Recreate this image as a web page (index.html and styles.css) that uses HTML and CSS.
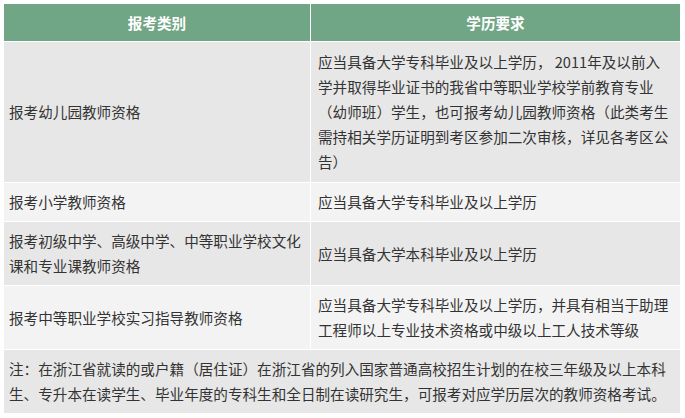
FILE: index.html
```html
<!DOCTYPE html>
<html lang="zh-CN">
<head>
<meta charset="utf-8">
<title>教师资格学历要求</title>
<link rel="stylesheet" href="styles.css">
</head>
<body>
<table class="req">
  <thead>
    <tr class="head">
      <th class="col-a">报考类别</th>
      <th class="col-b">学历要求</th>
    </tr>
  </thead>
  <tbody>
    <tr class="dark tall">
      <td class="left">报考幼儿园教师资格</td>
      <td class="right">应当具备大学专科毕业及以上学历， 2011年及以前入<br>学并取得毕业证书的我省中等职业学校学前教育专业<br>（幼师班）学生，也可报考幼儿园教师资格（此类考生<br>需持相关学历证明到考区参加二次审核，详见各考区公<br>告）</td>
    </tr>
    <tr class="light">
      <td class="left">报考小学教师资格</td>
      <td class="right">应当具备大学专科毕业及以上学历</td>
    </tr>
    <tr class="dark">
      <td class="left">报考初级中学、高级中学、中等职业学校文化<br>课和专业课教师资格</td>
      <td class="right">应当具备大学本科毕业及以上学历</td>
    </tr>
    <tr class="light">
      <td class="left">报考中等职业学校实习指导教师资格</td>
      <td class="right">应当具备大学专科毕业及以上学历，并具有相当于助理<br>工程师以上专业技术资格或中级以上工人技术等级</td>
    </tr>
    <tr class="dark">
      <td class="left note" colspan="2">注：在浙江省就读的或户籍（居住证）在浙江省的列入国家普通高校招生计划的在校三年级及以上本科<br>生、专升本在读学生、毕业年度的专科生和全日制在读研究生，可报考对应学历层次的教师资格考试。</td>
    </tr>
  </tbody>
</table>
</body>
</html>
```

FILE: styles.css
```css
html, body {
  margin: 0;
  padding: 0;
  background: #ffffff;
}

body {
  padding: 3px 0 0 3px;
  font-family: "Noto Sans CJK SC", "Microsoft YaHei", sans-serif;
  font-size: 14.6px;
  color: #333333;
}

.req {
  border-collapse: separate;
  border-spacing: 1px;
  background: #ffffff;
  width: 677px;
  table-layout: fixed;
}

.col-a {
  width: 306px;
}

.col-b {
  width: 369px;
}

.head th {
  height: 37px;
  padding: 0;
  background: #70a585;
  color: #ffffff;
  font-weight: bold;
  text-align: center;
  vertical-align: middle;
  line-height: 20px;
}

td {
  padding: 6px 2px 7px 0;
  line-height: 25px;
  vertical-align: middle;
  white-space: nowrap;
}

.left {
  padding-left: 5px;
}

.right {
  padding-left: 7px;
}

.note {
  white-space: nowrap;
}

.dark td {
  background: #e7e7e7;
}

.light td {
  background: #f3f3f3;
}

.tall td {
  height: 127px;
}
```
